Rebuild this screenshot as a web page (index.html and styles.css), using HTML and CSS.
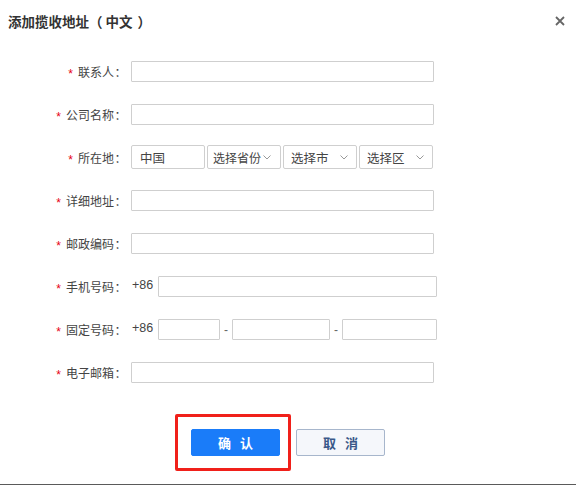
FILE: index.html
```html
<!DOCTYPE html>
<html lang="zh">
<head>
<meta charset="utf-8">
<title>添加揽收地址（中文）</title>
<link rel="stylesheet" href="styles.css">
</head>
<body>
<div class="dialog">
  <div class="header">
    <span class="title">添加揽收地址<span class="paren-l">（</span>中文<span class="paren-r">）</span></span>
    <svg class="close" width="10" height="10" viewBox="0 0 10 10"><path d="M1 1L9 9M9 1L1 9" stroke="#666" stroke-width="1.8" fill="none"/></svg>
  </div>
  <div class="form">
    <div class="row">
      <label class="label"><span class="star">*</span>联系人<span class="colon">：</span></label>
      <div class="field"><span class="input w-full"></span></div>
    </div>
    <div class="row">
      <label class="label"><span class="star">*</span>公司名称<span class="colon">：</span></label>
      <div class="field"><span class="input w-full"></span></div>
    </div>
    <div class="row">
      <label class="label"><span class="star">*</span>所在地<span class="colon">：</span></label>
      <div class="field sel-group">
        <span class="box country">中国</span>
        <span class="box select tight">选择省份<svg class="arrow" width="8" height="5" viewBox="0 0 8 5"><path d="M0.5 0.5L4 4L7.5 0.5" stroke="#999" fill="none"/></svg></span>
        <span class="box select">选择市<svg class="arrow" width="8" height="5" viewBox="0 0 8 5"><path d="M0.5 0.5L4 4L7.5 0.5" stroke="#999" fill="none"/></svg></span>
        <span class="box select">选择区<svg class="arrow" width="8" height="5" viewBox="0 0 8 5"><path d="M0.5 0.5L4 4L7.5 0.5" stroke="#999" fill="none"/></svg></span>
      </div>
    </div>
    <div class="row">
      <label class="label"><span class="star">*</span>详细地址<span class="colon">：</span></label>
      <div class="field"><span class="input w-full"></span></div>
    </div>
    <div class="row">
      <label class="label"><span class="star">*</span>邮政编码<span class="colon">：</span></label>
      <div class="field"><span class="input w-full"></span></div>
    </div>
    <div class="row">
      <label class="label"><span class="star">*</span>手机号码<span class="colon">：</span></label>
      <div class="field">
        <span class="prefix">+86</span>
        <span class="input w-phone"></span>
      </div>
    </div>
    <div class="row">
      <label class="label"><span class="star">*</span>固定号码<span class="colon">：</span></label>
      <div class="field">
        <span class="prefix">+86</span>
        <span class="input w-area"></span>
        <span class="dash">-</span>
        <span class="input w-num"></span>
        <span class="dash">-</span>
        <span class="input w-ext"></span>
      </div>
    </div>
    <div class="row">
      <label class="label"><span class="star">*</span>电子邮箱<span class="colon">：</span></label>
      <div class="field"><span class="input w-full"></span></div>
    </div>
  </div>
  <div class="actions">
    <div class="highlight">
      <button class="btn btn-primary">确 认</button>
    </div>
    <button class="btn btn-default">取 消</button>
  </div>
  <div class="strip"></div>
</div>
</body>
</html>
```
FILE: styles.css
```css
*, *::before, *::after { box-sizing: border-box; }
html, body { margin: 0; padding: 0; background: #fff; }
body {
  font-family: "Noto Sans CJK SC", "Liberation Sans", sans-serif;
  font-size: 12px;
  color: #333;
}
.dialog {
  width: 576px;
  height: 485px;
  display: flex;
  flex-direction: column;
  background: #fff;
}
.header {
  height: 42px;
  display: flex;
  align-items: center;
  justify-content: space-between;
  padding: 0 11px 0 8px;
}
.title {
  font-size: 13.5px;
  font-weight: bold;
  color: #333;
}
.paren-l { margin: 0 3px 0 0; }
.paren-r { margin-left: 5px; }
.close { display: block; margin-top: -1px; }
.form {
  padding-top: 8px;
  display: flex;
  flex-direction: column;
}
.row {
  height: 43px;
  display: flex;
  align-items: center;
}
.label {
  width: 127px;
  text-align: right;
  color: #444;
  font-size: 12px;
  white-space: nowrap;
  margin-right: 4px;
}
.colon { display: inline-block; width: 13px; text-align: center; }
.star {
  color: #e60012;
  margin-right: 5px;
  font-family: "Liberation Sans", sans-serif;
  font-size: 12px;
  position: relative;
  top: 1px;
}
.field {
  display: flex;
  align-items: center;
}
.input {
  display: block;
  height: 21px;
  border: 1px solid #cfcfcf;
  border-radius: 1px;
  background: #fff;
}
.w-full { width: 303px; }
.w-phone { width: 279px; }
.w-area { width: 62px; }
.w-num { width: 98px; }
.w-ext { width: 95px; }
.prefix {
  width: 27px;
  padding-left: 1px;
  font-family: "Liberation Sans", sans-serif;
  font-size: 12.5px;
  color: #444;
  position: relative;
  top: -2px;
}
.dash {
  width: 12px;
  text-align: center;
  color: #666;
  font-family: "Liberation Sans", sans-serif;
}
.sel-group { gap: 2px; margin-top: -1px; }
.box {
  display: flex;
  align-items: center;
  height: 24px;
  width: 74px;
  border: 1px solid #cfcfcf;
  border-radius: 2px;
  padding-left: 7px;
  color: #444;
  font-size: 12.5px;
  white-space: nowrap;
}
.country { padding-left: 8px; }
.select { justify-content: space-between; padding-right: 8px; }
.select.tight { justify-content: flex-start; padding-left: 5px; padding-right: 0; font-size: 12px; }
.select.tight .arrow { margin-left: 2px; flex: none; }
.arrow { display: block; }
.actions {
  margin-top: 35px;
  display: flex;
  justify-content: center;
  gap: 16px;
}
.highlight { position: relative; }
.highlight::after {
  content: "";
  position: absolute;
  left: -16px;
  top: -15px;
  width: 116px;
  height: 57px;
  border: 3px solid #f0201a;
  border-radius: 2px;
  pointer-events: none;
}
.btn {
  display: block;
  height: 27px;
  width: 89px;
  border-radius: 2px;
  font-family: "Noto Sans CJK SC", sans-serif;
  font-size: 13px;
  font-weight: bold;
  letter-spacing: 3px;
  padding: 0 0 0 3px;
  cursor: pointer;
}
.btn-primary {
  background: #1a7cf9;
  border: 1px solid #1a7cf9;
  color: #fff;
}
.btn-default {
  background: #f5f7fb;
  border: 1px solid #a7b6cc;
  color: #3a5889;
}
.strip {
  margin-top: auto;
  height: 1px;
  background: #5a5a5a;
}
```
